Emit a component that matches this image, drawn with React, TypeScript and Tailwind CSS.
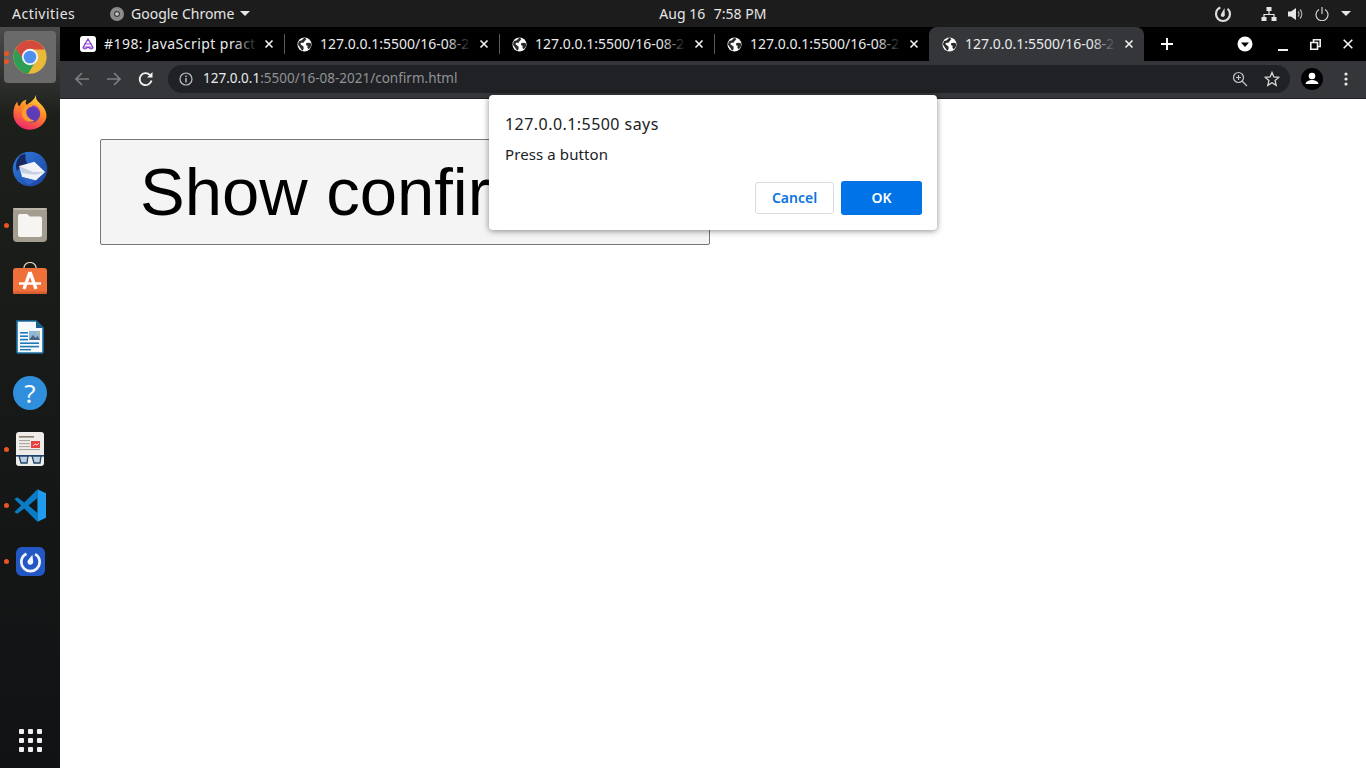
import React from "react";

const Chrome = () => (
  <svg width="34" height="34" viewBox="0 0 100 100">
    <circle cx="50" cy="50" r="49" fill="#e9b93a" />
    <path d="M50 1A49 49 0 0 0 8 25.5L29 61 50 28H93A49 49 0 0 0 50 1Z" fill="#d64a3e" />
    <path d="M8 25.5A49 49 0 0 0 45 98.8L66 63 36 65 8 25.5Z" fill="#2f9e55" />
    <circle cx="50" cy="50" r="24" fill="#f3f3f3" />
    <circle cx="50" cy="50" r="18.5" fill="#4f8ff0" />
  </svg>
);

const Firefox = () => (
  <svg width="34" height="36" viewBox="0 0 100 106" className="-mt-[2px]">
    <defs>
      <linearGradient id="ff1" x1="0.7" y1="0" x2="0.3" y2="1">
        <stop offset="0" stopColor="#ffd93d" />
        <stop offset="0.45" stopColor="#ff8a24" />
        <stop offset="1" stopColor="#f0246e" />
      </linearGradient>
    </defs>
    <path d="M68 2C66 16 72 20 82 30 96 44 100 58 98 70 92 92 72 105 50 105 22 105 1 84 1 58 1 44 5 30 13 22 13 30 15 34 19 36 24 26 30 18 40 17 36 24 36 28 40 32 48 26 62 20 68 2Z" fill="url(#ff1)" />
    <circle cx="54" cy="58" r="26" fill="#5b3bb8" />
    <path d="M30 44C40 30 58 28 70 38 58 34 44 38 40 48 36 60 46 76 64 78 50 88 28 78 26 60 26 54 27 48 30 44Z" fill="#ff9a2e" />
    <path d="M56 34C66 32 78 42 80 56 74 44 66 38 56 38Z" fill="#a13bc4" />
  </svg>
);

const Thunderbird = () => (
  <svg width="36" height="36" viewBox="0 0 100 100">
    <defs>
      <linearGradient id="tb1" x1="0" y1="0" x2="1" y2="1">
        <stop offset="0" stopColor="#2f7fe0" />
        <stop offset="1" stopColor="#1b3f9c" />
      </linearGradient>
    </defs>
    <circle cx="50" cy="50" r="48" fill="url(#tb1)" />
    <path d="M22 14C12 26 8 40 14 56 22 44 30 38 44 36 38 30 36 22 38 8 32 8 26 10 22 14Z" fill="#16285f" />
    <path d="M20 42 62 30 92 58 66 82 28 72Z" fill="#f1f3f8" />
    <path d="M20 42 58 58 92 58 66 66 28 62Z" fill="#c8d0e4" />
    <path d="M28 72 66 82 48 94C38 88 32 82 28 72Z" fill="#2c66c8" />
  </svg>
);

const Files = () => (
  <svg width="34" height="34" viewBox="0 0 34 34">
    <rect width="34" height="34" rx="4" fill="#a39d8f" />
    <path d="M5 8a2 2 0 0 1 2-2h7l3 2.500h10a2 2 0 0 1 2 2V27a2 2 0 0 1-2 2H7a2 2 0 0 1-2-2Z" fill="#f6f5f2" />
    <rect x="0" y="0" width="34" height="2" rx="1" fill="#bbb6a9" />
  </svg>
);

const AppStore = () => (
  <svg width="34" height="32" viewBox="0 0 34 32" className="-mt-[6px]">
    <path d="M11 7V5.500a6 5 0 0 1 12 0V7" fill="none" stroke="#e8d6b8" strokeWidth="1.200" />
    <rect y="6" width="34" height="26" rx="3" fill="#f0703a" />
    <path d="M17 10 11 27M17 10l6 17" stroke="#fff" strokeWidth="3.400" fill="none" />
    <path d="M6 21.500h22" stroke="#fff" strokeWidth="2.400" />
    <rect y="29.500" width="34" height="2.500" rx="1.250" fill="#d85f30" />
  </svg>
);

const Writer = () => (
  <svg width="28" height="34" viewBox="0 0 28 34">
    <path d="M1 1h19l7 7v24a1 1 0 0 1-1 1H2a1 1 0 0 1-1-1Z" fill="#f6fafd" stroke="#1b6fa8" strokeWidth="1.600" />
    <path d="M20 0l8 8h-8Z" fill="#17618f" />
    <rect x="4" y="12" width="8" height="1.600" fill="#1f7ab8" />
    <rect x="4" y="15.400" width="8" height="1.600" fill="#1f7ab8" />
    <rect x="4" y="18.800" width="8" height="1.600" fill="#1f7ab8" />
    <rect x="4" y="22.400" width="19" height="1.600" fill="#1f7ab8" />
    <rect x="4" y="25.800" width="19" height="1.600" fill="#1f7ab8" />
    <rect x="4" y="29" width="11" height="1.400" fill="#1f7ab8" />
    <rect x="13" y="11" width="11" height="9" fill="#8fb8d8" />
    <path d="M13 20l4-5 2.500 3 2-2 2.500 4Z" fill="#49637a" />
    <circle cx="22" cy="13" r="1" fill="#f2c53d" />
  </svg>
);

const Help = () => (
  <svg width="34" height="34" viewBox="0 0 34 34">
    <circle cx="17" cy="17" r="17" fill="#2f8fdc" />
    <text x="17" y="27" textAnchor="middle" fontSize="26" fill="#f4f8fc" fontFamily="'Noto Sans', sans-serif">?</text>
  </svg>
);

const Reader = () => (
  <svg width="28" height="34" viewBox="0 0 28 34">
    <rect width="28" height="34" rx="3" fill="#eeede9" />
    <rect x="3" y="4" width="15" height="1.600" fill="#8a7d6a" />
    <rect x="3" y="8" width="11" height="1.100" fill="#aaa79f" />
    <rect x="3" y="11" width="11" height="1.100" fill="#aaa79f" />
    <rect x="3" y="14" width="11" height="1.100" fill="#aaa79f" />
    <rect x="3" y="17" width="21" height="1.100" fill="#aaa79f" />
    <rect x="15" y="9" width="9" height="7" fill="#e5433f" />
    <path d="M17 14l2-2 2 1 2-2" stroke="#fff" strokeWidth="0.800" fill="none" />
    <rect x="0" y="23" width="28" height="1.600" fill="#23466f" />
    <path d="M3 24h9l-1 7H5ZM16 24h9l-1 7h-6Z" fill="#bcd0de" stroke="#23466f" strokeWidth="1.300" />
  </svg>
);

const VSCode = () => (
  <svg width="33" height="33" viewBox="0 0 100 100">
    <path d="M71 1 97 13V87L71 99Z" fill="#1f9cf0" />
    <path d="M71 1 31 41 10 25 1 30 22 50 1 70 10 75 31 59 71 99 73 74 44 50 73 26Z" fill="#0a7cc6" />
  </svg>
);

const Mattermost = () => (
  <svg width="29" height="29" viewBox="0 0 30 30">
    <rect width="30" height="30" rx="6" fill="#2358c4" />
    <circle cx="15" cy="15.500" r="9.500" fill="none" stroke="#f2f5fb" strokeWidth="2.800" strokeDasharray="50 10" strokeDashoffset="-5" transform="rotate(-90 15 15.500)" />
    <path d="M17 8 17.800 15a3 3 0 1 1-5.400-1.400Z" fill="#f2f5fb" />
  </svg>
);

const Globe = () => (
  <svg width="15" height="15" viewBox="0 0 16 16" className="shrink-0">
    <circle cx="8" cy="8" r="7.500" fill="#fff" />
    <path d="M2 4.500 5 3.500 8 .6 10 2.500 8 4.500 7 6 4.500 6 3.500 7.500 6 9.500 7 10 7 13 5.500 14.600 3 11 1 8ZM10 6.500 13 6 15 7 14.800 10.500 12.500 13 11 11.500 11.500 9.500 9.500 8.500Z" fill="#2a2a2a" />
  </svg>
);

const TabX = () => (
  <svg width="10" height="10" viewBox="0 0 10 10" className="shrink-0">
    <path d="M1.500 1.500l7 7M8.500 1.500l-7 7" stroke="#f1f1f1" strokeWidth="1.600" />
  </svg>
);

function Tab({ label, icon, active, last, textW, first }: { label: string; icon: React.ReactNode; active?: boolean; last?: boolean; textW: number; first?: boolean }) {
  return (
    <div className={`relative flex h-[34px] shrink-0 items-center pl-[12px] ${first ? "w-[216px]" : "w-[215px]"} ${active ? "rounded-t-[8px] bg-[#35363a]" : ""}`}>
      <div className="flex w-[16px] shrink-0 justify-center">{icon}</div>
      <div className={`relative -mt-[1px] ml-[8px] whitespace-nowrap text-[14px] text-[#e8eaed] ${first ? "tracking-[0.45px]" : ""}`} style={{ width: textW }}>
        {label}
        <div className={`absolute inset-y-0 right-0 w-[24px] bg-gradient-to-r from-transparent ${active ? "to-[#35363a]" : "to-black"}`} />
      </div>
      <div className="absolute right-[10px] top-[12px]"><TabX /></div>
      {!last && !active && <div className="absolute -right-px top-[7px] h-[20px] w-px bg-[#5a5a5a]" />}
    </div>
  );
}

const Dot = () => <div className="h-[5px] w-[5px] rounded-full bg-[#e9541f]" />;

function DockItem({ children, dots = 0, active }: { children: React.ReactNode; dots?: number; active?: boolean }) {
  return (
    <div className="relative flex h-[56px] w-[60px] shrink-0 items-center justify-center">
      {active && <div className="absolute left-[4px] top-[2px] h-[52px] w-[52px] rounded-[4px] bg-[#6a6a6a]" />}
      <div className="relative flex items-center justify-center">{children}</div>
      {dots > 0 && (
        <div className="absolute left-[4px] top-0 flex h-full flex-col justify-center gap-[3px]">
          {Array.from({ length: dots }).map((_, i) => <Dot key={i} />)}
        </div>
      )}
    </div>
  );
}

export default function App() {
  return (
    <div className="relative flex h-[768px] w-[1366px] flex-col overflow-hidden bg-white font-['Noto_Sans',sans-serif]">
      {/* GNOME top bar */}
      <div className="flex h-[27px] shrink-0 items-center bg-[#1c1c1c] text-[14px] text-[#e6e6e6]">
        <span className="ml-[12px] w-[98px] tracking-[0.5px]">Activities</span>
        <svg width="14" height="14" viewBox="0 0 14 14" className="shrink-0">
          <circle cx="7" cy="7" r="7" fill="#8b8b8b" />
          <circle cx="7" cy="7" r="3" fill="#3d3d3d" />
          <circle cx="7" cy="7" r="1.800" fill="#d0d0d0" />
        </svg>
        <span className="ml-[7px]">Google Chrome</span>
        <svg width="10" height="5" viewBox="0 0 10 5" className="ml-[6px]"><path d="M0 0h10L5 5Z" fill="#e6e6e6" /></svg>
        <div className="ml-[409px] flex w-[107px] justify-between">
          <span>Aug 16</span>
          <span>7:58 PM</span>
        </div>
        <div className="ml-auto flex items-center">
          <svg width="18" height="18" viewBox="0 0 18 18" className="mr-[29px]">
            <circle cx="9" cy="9" r="7" fill="none" stroke="#dedede" strokeWidth="2.200" strokeDasharray="36 8" strokeDashoffset="-5" transform="rotate(-90 9 9)" />
            <path d="M10.500 3 10.800 9.500a2 2 0 1 1-3.400-1Z" fill="#dedede" />
          </svg>
          <svg width="16" height="14" viewBox="0 0 16 14" className="mr-[11px]">
            <rect x="5.500" y="0" width="5" height="4" fill="#e6e6e6" />
            <rect x="0.500" y="10" width="5" height="4" fill="#e6e6e6" />
            <rect x="10.500" y="10" width="5" height="4" fill="#e6e6e6" />
            <path d="M8 4v3M3 10V7.500h10V10" stroke="#e6e6e6" strokeWidth="1.200" fill="none" />
          </svg>
          <svg width="16" height="14" viewBox="0 0 16 14" className="mr-[11px]">
            <path d="M0 4.500h3L8 1v12L3 9.500H0Z" fill="#e6e6e6" />
            <path d="M10 4.500a3.500 3.500 0 0 1 0 5M12 2.500a6.500 6.500 0 0 1 0 9" stroke="#b8b8b8" strokeWidth="1.100" fill="none" />
          </svg>
          <svg width="14" height="14" viewBox="0 0 14 14" className="mr-[12px]">
            <path d="M4 2.500a6 6 0 1 0 6 0" stroke="#e0e0e0" strokeWidth="1.100" fill="none" />
            <path d="M7 0v7" stroke="#e0e0e0" strokeWidth="1.100" />
          </svg>
          <svg width="10" height="5" viewBox="0 0 10 5" className="mr-[15px]"><path d="M0 0h10L5 5Z" fill="#e6e6e6" /></svg>
        </div>
      </div>

      <div className="flex min-h-0 flex-1">
        {/* Dock */}
        <div className="flex w-[60px] shrink-0 flex-col bg-gradient-to-b from-[#4c4c4c] via-[#1d1f1b] via-[12%] to-[#101214] pt-[2px]">
          <DockItem active dots={2}><Chrome /></DockItem>
          <DockItem><Firefox /></DockItem>
          <DockItem><Thunderbird /></DockItem>
          <DockItem dots={1}><Files /></DockItem>
          <DockItem><AppStore /></DockItem>
          <DockItem><Writer /></DockItem>
          <DockItem><Help /></DockItem>
          <DockItem dots={1}><Reader /></DockItem>
          <DockItem dots={1}><VSCode /></DockItem>
          <DockItem dots={1}><Mattermost /></DockItem>
          <div className="mt-auto grid w-[23px] grid-cols-3 gap-[4px] self-center pb-[16px]">
            {Array.from({ length: 9 }).map((_, i) => <div key={i} className="h-[5px] w-[5px] rounded-[1px] bg-[#f0f0f0]" />)}
          </div>
        </div>

        {/* Chrome window */}
        <div className="flex min-w-0 flex-1 flex-col">
          <div className="flex h-[34px] shrink-0 items-center bg-black pl-[8px] text-[#e8eaed]">
            <Tab
              first
              textW={154}
              label="#198: JavaScript pract"
              icon={
                <svg width="16" height="16" viewBox="0 0 16 16">
                  <rect width="16" height="16" rx="3" fill="#fff" />
                  <path d="M3 11.500 8 3l5 8.500a2 2 0 0 1-3 1L8 11l-2 1.500a2 2 0 0 1-3-1ZM4 8h8M3.500 11h9" fill="none" stroke="#8b3fd1" strokeWidth="1.200" />
                </svg>
              }
            />
            <Tab textW={151} label="127.0.0.1:5500/16-08-2" icon={<Globe />} />
            <Tab textW={151} label="127.0.0.1:5500/16-08-2" icon={<Globe />} />
            <Tab textW={151} last label="127.0.0.1:5500/16-08-2" icon={<Globe />} />
            <Tab textW={151} active label="127.0.0.1:5500/16-08-2" icon={<Globe />} />
            <svg width="14" height="14" viewBox="0 0 14 14" className="ml-[16px] shrink-0"><path d="M7 1v12M1 7h12" stroke="#fff" strokeWidth="1.900" /></svg>
            <svg width="16" height="16" viewBox="0 0 16 16" className="ml-[63px] shrink-0">
              <circle cx="8" cy="8" r="7.500" fill="#fff" />
              <path d="M4 6.500h8L8 11Z" fill="#000" />
            </svg>
            <svg width="10" height="2" viewBox="0 0 10 2" className="ml-[25px] mt-[12px] shrink-0"><rect width="10" height="2" fill="#f0f0f0" /></svg>
            <svg width="11" height="11" viewBox="0 0 11 11" className="ml-[22px] shrink-0">
              <path d="M3.500 3V.8h6.700v6.700H7.800M.8 3.500h6.700v6.700H.8Z" fill="none" stroke="#f0f0f0" strokeWidth="1.600" />
            </svg>
            <svg width="10" height="10" viewBox="0 0 10 10" className="ml-[22px] shrink-0"><path d="M.7.7l8.600 8.600M9.300.7.700 9.300" stroke="#f4f4f4" strokeWidth="1.600" /></svg>
          </div>

          {/* Toolbar */}
          <div className="flex h-[37px] shrink-0 items-center bg-[#35363a] pb-[1px]">
            <svg width="16" height="16" viewBox="0 0 16 16" className="ml-[14px]"><path d="M15 8H2M8 2 2 8l6 6" fill="none" stroke="#7d7e80" strokeWidth="1.700" /></svg>
            <svg width="16" height="16" viewBox="0 0 16 16" className="ml-[16px]"><path d="M1 8h13M8 2l6 6-6 6" fill="none" stroke="#7d7e80" strokeWidth="1.700" /></svg>
            <svg width="16" height="16" viewBox="0 0 16 16" className="ml-[16px]">
              <path d="M13.500 9.500A6 6 0 1 1 12 4" fill="none" stroke="#f4f4f4" strokeWidth="1.800" />
              <path d="M14.500 1v5.500H9Z" fill="#f4f4f4" />
            </svg>
            <div className="ml-[14px] flex h-[28px] w-[1122px] items-center rounded-full bg-[#202124]">
              <svg width="14" height="14" viewBox="0 0 14 14" className="ml-[11px]">
                <circle cx="7" cy="7" r="6" fill="none" stroke="#bdc1c6" strokeWidth="1.200" />
                <rect x="6.300" y="6" width="1.400" height="4.500" fill="#bdc1c6" />
                <rect x="6.300" y="3.500" width="1.400" height="1.500" fill="#bdc1c6" />
              </svg>
              <div className="-mt-[2px] ml-[10px] whitespace-nowrap text-[13.500px]">
                <span className="text-[#e8eaed]">127.0.0.1</span>
                <span className="text-[#8f9296]">:5500/16-08-2021/confirm.html</span>
              </div>
              <svg width="16" height="16" viewBox="0 0 16 16" className="ml-auto mr-[16px]">
                <circle cx="6.500" cy="6.500" r="5" fill="none" stroke="#c4c7ca" strokeWidth="1.200" />
                <path d="M10 10l5 5M4 6.500h5M6.500 4v5" stroke="#c4c7ca" strokeWidth="1.200" fill="none" />
              </svg>
              <svg width="16" height="16" viewBox="0 0 16 16" className="mr-[10px]">
                <path d="M8 1.500 9.900 6l4.800.4-3.600 3.200 1.100 4.700L8 11.800l-4.200 2.500 1.100-4.700L1.300 6.400 6.100 6Z" fill="none" stroke="#d8dadc" strokeWidth="1.300" />
              </svg>
            </div>
            <svg width="22" height="22" viewBox="0 0 22 22" className="ml-[11px]">
              <circle cx="11" cy="11" r="11" fill="#000" />
              <circle cx="11" cy="8" r="3.300" fill="#fff" />
              <path d="M4.500 16c.5-3 4-4 6.500-4s6 1 6.500 4Z" fill="#fff" />
            </svg>
            <svg width="4" height="14" viewBox="0 0 4 14" className="ml-[21px]">
              <circle cx="2" cy="2" r="1.600" fill="#e8e8e8" />
              <circle cx="2" cy="7" r="1.600" fill="#e8e8e8" />
              <circle cx="2" cy="12" r="1.600" fill="#e8e8e8" />
            </svg>
          </div>
          <div className="h-px shrink-0 bg-[#202124]" />

          {/* Page */}
          <div className="min-h-0 flex-1 bg-white pl-[40px] pt-[40px]">
            <button className="flex h-[106px] w-[610px] items-center overflow-hidden whitespace-nowrap rounded-[2px] border border-[#767676] bg-[#f4f4f4] pl-[39px] font-['Liberation_Sans',sans-serif] text-[67px] text-black">
              Show confirm box
            </button>
          </div>
        </div>
      </div>

      {/* Alert dialog */}
      <div className="absolute left-[489px] top-[95px] flex h-[135px] w-[448px] flex-col rounded-[4px] bg-white pl-[16px] pr-[15px] shadow-[0_1px_6px_rgba(0,0,0,0.45)]">
        <div className="mt-[17px] text-[16px] leading-[24px] tracking-[0.45px] text-[#202124]">127.0.0.1:5500 says</div>
        <div className="mt-[7px] text-[15px] leading-[22px] tracking-[0.1px] text-[#202124]">Press a button</div>
        <div className="mt-auto mb-[15px] flex items-center justify-end gap-[7px]">
          <button className="h-[32px] w-[79px] rounded-[3px] border border-[#dadce0] bg-white pb-[2px] text-[14px] font-semibold text-[#0b74de]">Cancel</button>
          <button className="h-[34px] w-[81px] rounded-[3px] bg-[#0073e6] pb-[2px] text-[14px] font-semibold text-white">OK</button>
        </div>
      </div>
    </div>
  );
}
